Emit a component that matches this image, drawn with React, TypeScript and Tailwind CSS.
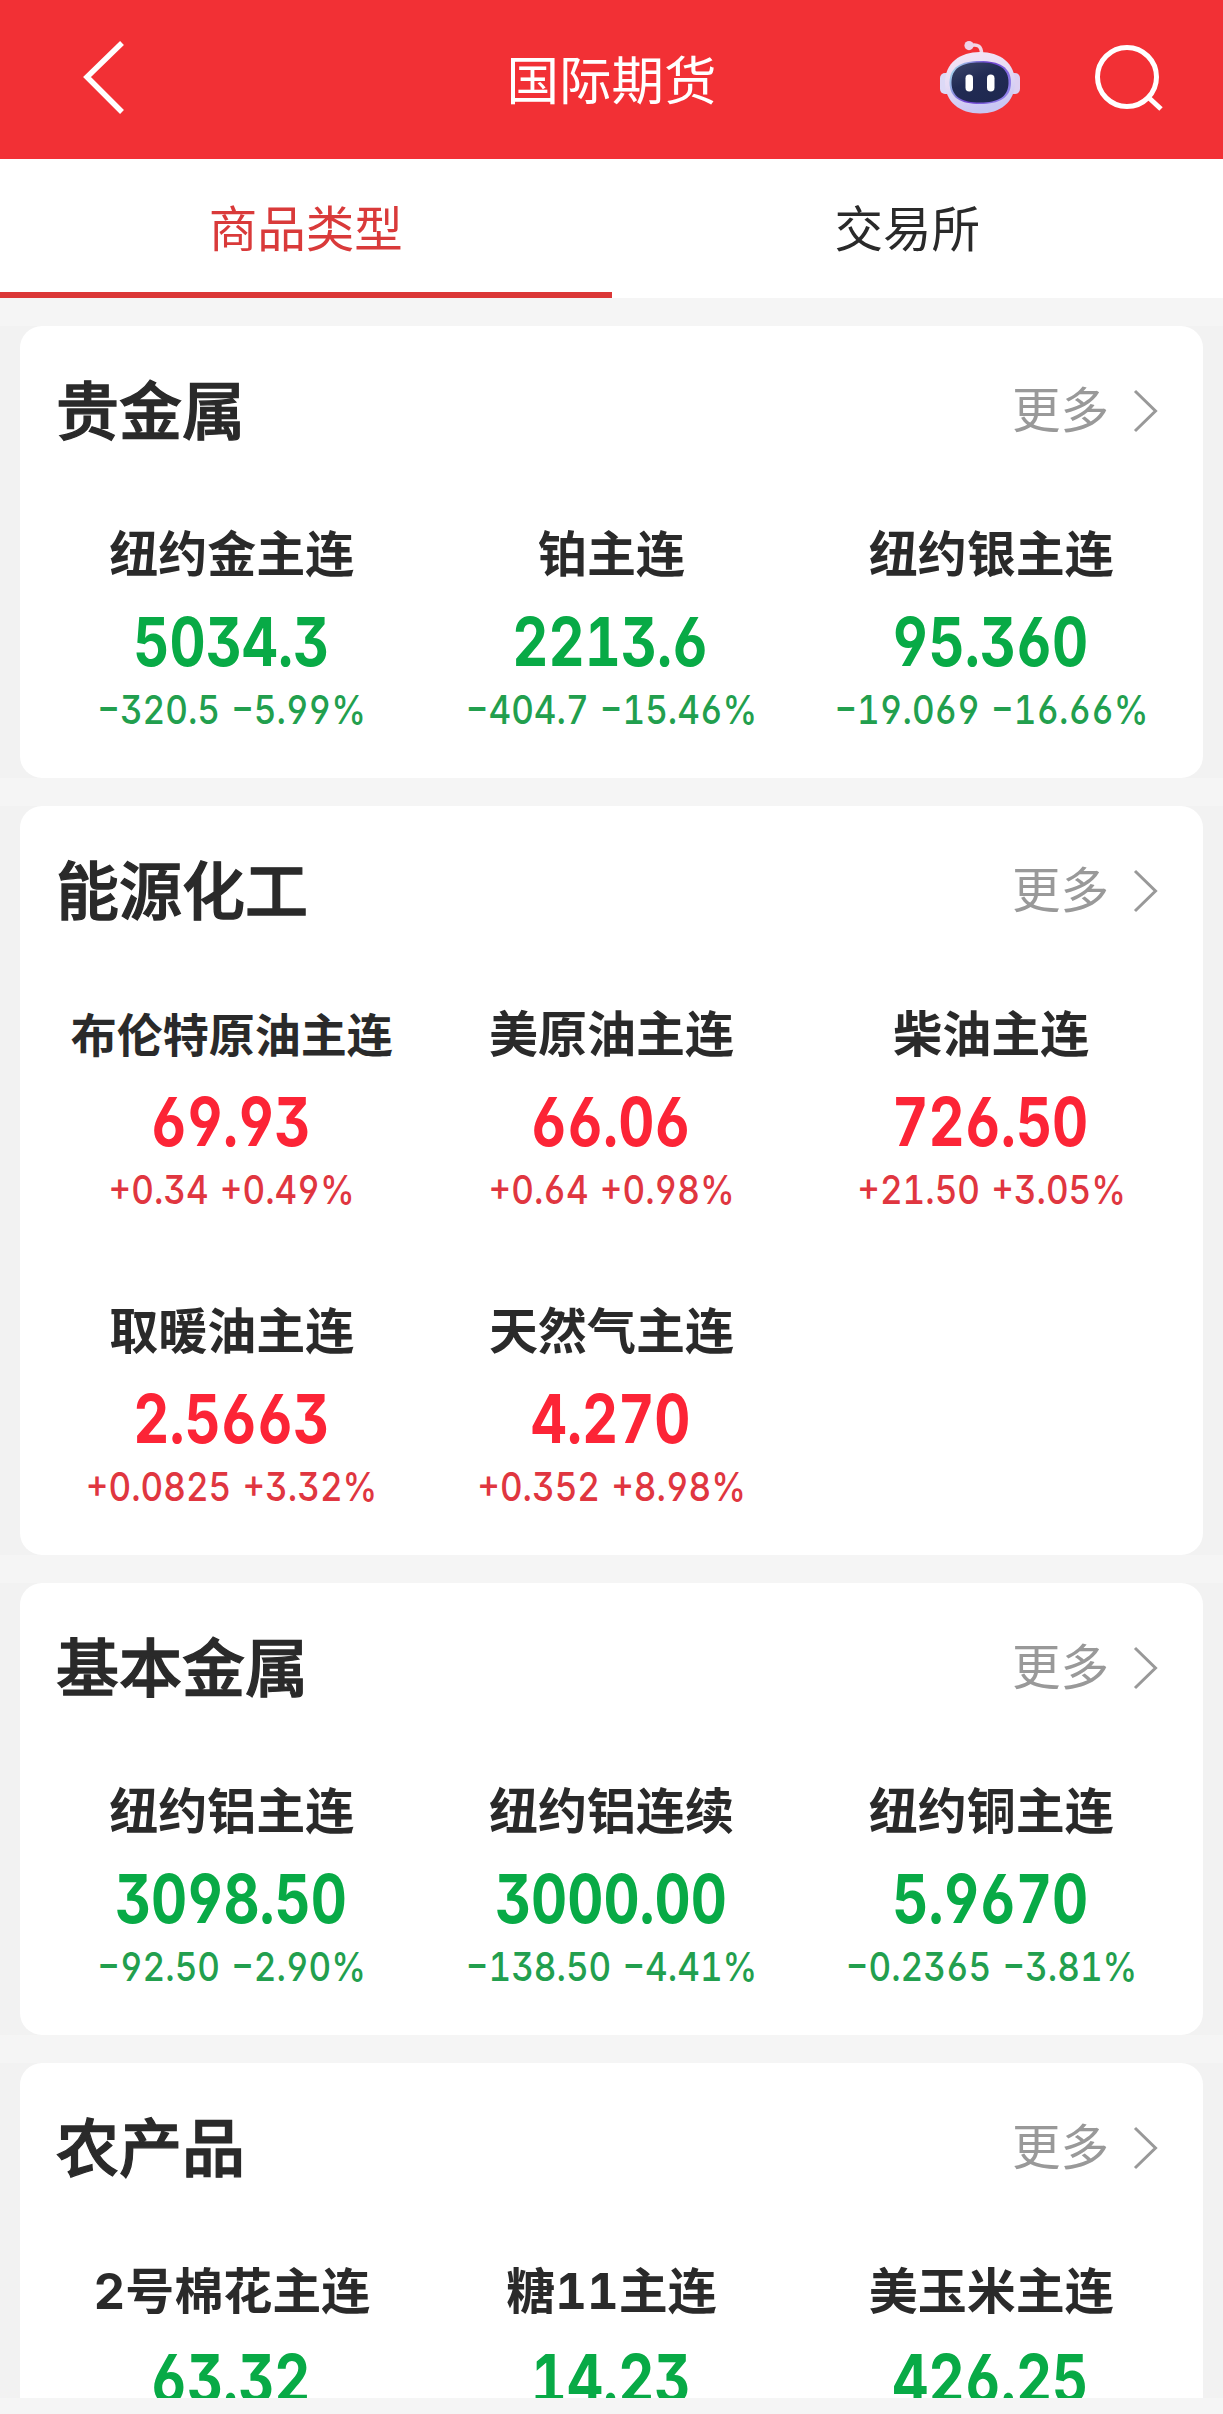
import { useState } from 'react';
import clsx from 'clsx';

type Quote = {
  name: string;
  price: string;
  change?: string;
  percent?: string;
  up?: boolean;
};

type Section = {
  title: string;
  quotes: Quote[];
};

const TABS = ['商品类型', '交易所'];

const SECTIONS: Section[] = [
  {
    title: '贵金属',
    quotes: [
      { name: '纽约金主连', price: '5034.3', change: '−320.5', percent: '−5.99%' },
      { name: '铂主连', price: '2213.6', change: '−404.7', percent: '−15.46%' },
      { name: '纽约银主连', price: '95.360', change: '−19.069', percent: '−16.66%' },
    ],
  },
  {
    title: '能源化工',
    quotes: [
      { name: '布伦特原油主连', price: '69.93', change: '+0.34', percent: '+0.49%', up: true },
      { name: '美原油主连', price: '66.06', change: '+0.64', percent: '+0.98%', up: true },
      { name: '柴油主连', price: '726.50', change: '+21.50', percent: '+3.05%', up: true },
      { name: '取暖油主连', price: '2.5663', change: '+0.0825', percent: '+3.32%', up: true },
      { name: '天然气主连', price: '4.270', change: '+0.352', percent: '+8.98%', up: true },
    ],
  },
  {
    title: '基本金属',
    quotes: [
      { name: '纽约铝主连', price: '3098.50', change: '−92.50', percent: '−2.90%' },
      { name: '纽约铝连续', price: '3000.00', change: '−138.50', percent: '−4.41%' },
      { name: '纽约铜主连', price: '5.9670', change: '−0.2365', percent: '−3.81%' },
    ],
  },
  {
    title: '农产品',
    quotes: [
      { name: '2号棉花主连', price: '63.32' },
      { name: '糖11主连', price: '14.23' },
      { name: '美玉米主连', price: '426.25' },
    ],
  },
];

const BackIcon = () => (
  <svg width="44" height="76" viewBox="0 0 44 76" fill="none" stroke="#fff" strokeWidth="5.5">
    <path d="M41 3 6 37l35 35" />
  </svg>
);

const SearchIcon = () => (
  <svg width="70" height="72" viewBox="0 0 70 72" fill="none" stroke="#fff" strokeWidth="5">
    <circle cx="32" cy="34" r="29.5" />
    <path d="m53 54 13 12" />
  </svg>
);

const RobotIcon = () => (
  <svg width="82" height="76" viewBox="0 0 82 76">
    <defs>
      <linearGradient id="shell" x1="0" y1="0" x2="0.3" y2="1">
        <stop offset="0" stopColor="#f6e6f5" />
        <stop offset="0.5" stopColor="#e6dcf5" />
        <stop offset="1" stopColor="#c9c6f3" />
      </linearGradient>
      <linearGradient id="rim" x1="0" y1="0.2" x2="1" y2="0.6">
        <stop offset="0" stopColor="#a9e0ee" />
        <stop offset="0.5" stopColor="#6d3fd0" />
        <stop offset="1" stopColor="#8e7fe8" />
      </linearGradient>
      <linearGradient id="visor" x1="0" y1="0" x2="0.6" y2="1">
        <stop offset="0" stopColor="#3c4569" />
        <stop offset="0.5" stopColor="#212b54" />
        <stop offset="1" stopColor="#1f2850" />
      </linearGradient>
    </defs>
    <path d="M31 4.500c8-2 11.500 1 11.500 8" fill="none" stroke="#f3d5e4" strokeWidth="3.500" />
    <circle cx="30" cy="4.600" r="4.600" fill="#eed3ea" />
    <rect x="1" y="32" width="12" height="21" rx="5" fill="#dcd9f6" />
    <rect x="69" y="32" width="12" height="21" rx="5" fill="#dcd0f2" />
    <path d="M41 11c20 0 35 11 35 30.500S61 72.500 41 72.500 6 61 6 41.500 21 11 41 11Z" fill="url(#shell)" />
    <path d="M41 20c19 0 31 6 31 21.500S60 63 41 63 10.500 57 10.500 41.500 22 20 41 20Z" fill="url(#rim)" />
    <path d="M41 21.500c18 0 28.500 5.500 28.500 20S59 61.500 41 61.500 12.500 56 12.500 41.500 23 21.500 41 21.500Z" fill="url(#visor)" />
    <rect x="26.500" y="33.500" width="7.500" height="17" rx="3.750" fill="#fff" />
    <rect x="48" y="33.500" width="7.500" height="17" rx="3.750" fill="#fff" />
  </svg>
);

const ChevronIcon = () => (
  <svg width="26" height="44" viewBox="0 0 26 44" fill="none" stroke="#999" strokeWidth="3">
    <path d="m2 2 20.500 20L2 42" />
  </svg>
);

const Header = () => (
  <header className="grid h-[159px] grid-cols-[1fr_auto_1fr] items-center bg-[#f23035] text-white">
    <div className="pb-[4px] pl-[81px]">
      <BackIcon />
    </div>
    <h1 className="pt-[3px] text-[52.5px] leading-[60px]">国际期货</h1>
    <div className="flex items-center justify-end gap-[74px] pr-[58px] pb-[2px]">
      <RobotIcon />
      <SearchIcon />
    </div>
  </header>
);

const QuoteCell = ({ quote }: { quote: Quote }) => (
  <div
    className={clsx(
      "flex h-[297px] flex-col items-center pt-[44px] whitespace-nowrap [font-feature-settings:'tnum','cv03','cv04','cv09']",
      quote.up ? 'text-[#fc2436]' : 'text-[#08aa46]',
    )}
  >
    <span
      className={clsx(
        'leading-[60px] font-bold text-[#2a2a2a]',
        quote.name.length > 6 ? 'text-[46px]' : 'text-[49px]',
      )}
    >
      {quote.name}
    </span>
    <span className="mt-[22px] mr-[2px] scale-x-[0.835] text-[67px] leading-[70px] font-bold">{quote.price}</span>
    {quote.change && (
      <span
        className={clsx(
          'mt-[9px] scale-x-[0.875] text-[40px] leading-[48px] font-medium [word-spacing:2px]',
          quote.up ? 'text-[#e03640]' : 'text-[#229f4e]',
        )}
      >
        {quote.change} {quote.percent}
      </span>
    )}
  </div>
);

const SectionCard = ({ section }: { section: Section }) => (
  <div className="bg-[#f2f2f2] px-[20px]">
    <section className="rounded-[22px] bg-white px-[22px]">
      <div className="flex h-[155px] items-center justify-between px-[14px] pt-[14px]">
        <h2 className="text-[63px] leading-[80px] font-medium text-[#2a2a2a] [-webkit-text-stroke:1.3px_#2a2a2a]">
          {section.title}
        </h2>
        <button className="flex items-center gap-[24px] pr-[8px] text-[48.5px] leading-[60px] text-[#999]">
          更多
          <ChevronIcon />
        </button>
      </div>
      <div className="grid grid-cols-3">
        {section.quotes.map((quote) => (
          <QuoteCell key={quote.name} quote={quote} />
        ))}
      </div>
    </section>
  </div>
);

export default function App() {
  const [activeTab, setActiveTab] = useState(0);

  return (
    <div className="flex h-[2414px] w-[1223px] flex-col bg-[#f5f5f5] font-['Inter','Noto_Sans_CJK_SC',sans-serif]">
      <Header />
      <nav className="grid h-[139px] grid-cols-2 bg-white">
        {TABS.map((tab, i) => (
          <button
            key={tab}
            onClick={() => setActiveTab(i)}
            className={clsx(
              'border-b-[6px] pt-[8px] text-[48.5px] leading-[60px]',
              i === activeTab ? 'border-[#db3737] text-[#d93a3a]' : 'border-transparent text-[#2a2a2a]',
              i > 0 && 'pr-[20px]',
            )}
          >
            {tab}
          </button>
        ))}
      </nav>
      <main className="mt-[28px] flex h-[2072px] flex-col gap-[28px] overflow-hidden">
        {SECTIONS.map((section) => (
          <SectionCard key={section.title} section={section} />
        ))}
      </main>
    </div>
  );
}
